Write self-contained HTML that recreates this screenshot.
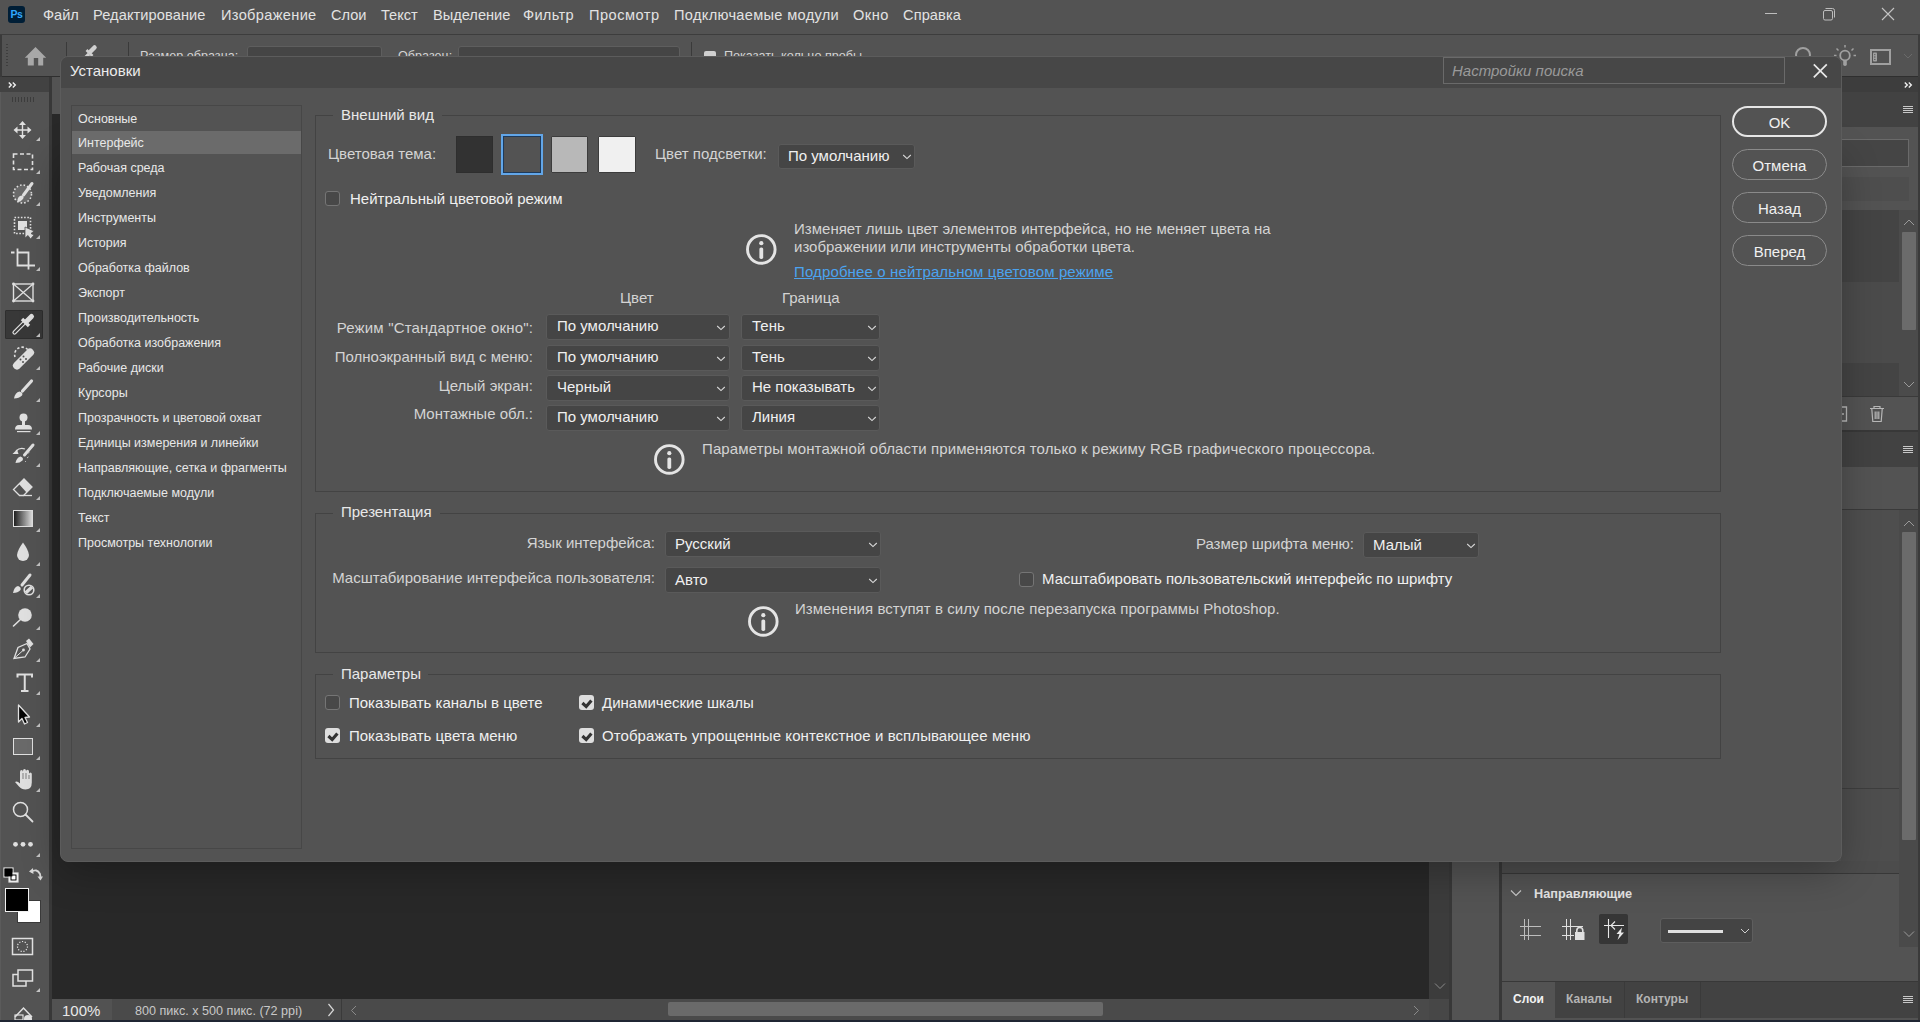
<!DOCTYPE html>
<html><head><meta charset="utf-8"><style>
html,body{margin:0;padding:0;width:1920px;height:1022px;overflow:hidden;background:#535353;font-family:"Liberation Sans",sans-serif;}
</style></head><body>
<div style="position:absolute;left:0px;top:0px;width:1920px;height:34px;background:#535353"></div>
<div style="position:absolute;left:0px;top:34px;width:1920px;height:1px;background:#3d3d3d"></div>
<div style="position:absolute;left:8px;top:6px;width:17px;height:17px;border-radius:3px;background:#001e36;color:#31a8ff;font-weight:700;font-size:10.5px;line-height:17px;text-align:center;letter-spacing:-0.3px">Ps</div>
<div style="position:absolute;top:7.64px;font-size:14.6px;line-height:14.6px;color:#e2e2e2;white-space:pre;left:43px;">Файл</div>
<div style="position:absolute;top:7.64px;font-size:14.6px;line-height:14.6px;color:#e2e2e2;white-space:pre;letter-spacing:0.1px;left:93px;">Редактирование</div>
<div style="position:absolute;top:7.64px;font-size:14.6px;line-height:14.6px;color:#e2e2e2;white-space:pre;letter-spacing:0.33px;left:221px;">Изображение</div>
<div style="position:absolute;top:7.64px;font-size:14.6px;line-height:14.6px;color:#e2e2e2;white-space:pre;left:331px;">Слои</div>
<div style="position:absolute;top:7.64px;font-size:14.6px;line-height:14.6px;color:#e2e2e2;white-space:pre;left:381px;">Текст</div>
<div style="position:absolute;top:7.64px;font-size:14.6px;line-height:14.6px;color:#e2e2e2;white-space:pre;left:433px;">Выделение</div>
<div style="position:absolute;top:7.64px;font-size:14.6px;line-height:14.6px;color:#e2e2e2;white-space:pre;letter-spacing:0.3px;left:523px;">Фильтр</div>
<div style="position:absolute;top:7.64px;font-size:14.6px;line-height:14.6px;color:#e2e2e2;white-space:pre;letter-spacing:0.5px;left:589px;">Просмотр</div>
<div style="position:absolute;top:7.64px;font-size:14.6px;line-height:14.6px;color:#e2e2e2;white-space:pre;letter-spacing:0.32px;left:674px;">Подключаемые модули</div>
<div style="position:absolute;top:7.64px;font-size:14.6px;line-height:14.6px;color:#e2e2e2;white-space:pre;letter-spacing:0.5px;left:853px;">Окно</div>
<div style="position:absolute;top:7.64px;font-size:14.6px;line-height:14.6px;color:#e2e2e2;white-space:pre;letter-spacing:0.1px;left:903px;">Справка</div>
<div style="position:absolute;left:1765px;top:13px;width:12px;height:1px;background:#bdbdbd"></div>
<svg style="position:absolute;left:1820px;top:6px;" width="16" height="16" viewBox="0 0 16 16"><rect x="3.5" y="4.5" width="9" height="9.5" rx="1.5" fill="none" stroke="#bdbdbd" stroke-width="1"/><path d="M5.5 2.5 H12.5 Q14.5 2.5 14.5 4.5 V11.5" fill="none" stroke="#bdbdbd" stroke-width="1"/></svg>
<svg style="position:absolute;left:1881px;top:7px;" width="14" height="14" viewBox="0 0 14 14"><path d="M1 1 L13 13 M13 1 L1 13" stroke="#c4c4c4" stroke-width="1.1"/></svg>
<div style="position:absolute;left:0px;top:35px;width:1920px;height:42px;background:#535353"></div>
<div style="position:absolute;left:0px;top:76px;width:1920px;height:1px;background:#2f2f2f"></div>
<div style="position:absolute;left:0px;top:35px;width:2px;height:42px;background:#3a3a3a"></div>
<div style="position:absolute;left:6px;top:44px;width:2px;height:24px;background:repeating-linear-gradient(180deg,#3e3e3e 0 1.5px,transparent 1.5px 3px)"></div>
<svg style="position:absolute;left:24px;top:46px;" width="24" height="20" viewBox="0 0 24 20"><path d="M11.5 1 L0.8 11.8 H3.8 V19.4 H9.8 V12 H14.2 V19.4 H19.2 V11.8 H22.2 Z" fill="#a8a8a8"/></svg>
<div style="position:absolute;left:66px;top:42px;width:1px;height:35px;background:#3a3a3a"></div>
<svg style="position:absolute;left:78px;top:42px;" width="24" height="20" viewBox="0 0 24 20"><path d="M16.5 5.5 L12.5 9.5" stroke="#d0d0d0" stroke-width="4.5" stroke-linecap="round"/><path d="M8.5 8 L14.5 14" stroke="#d0d0d0" stroke-width="2.6"/><path d="M11 12 L4 19" stroke="#d0d0d0" stroke-width="3.2"/></svg>
<div style="position:absolute;left:128px;top:42px;width:1px;height:35px;background:#3a3a3a"></div>
<div style="position:absolute;top:50.33px;font-size:12.6px;line-height:12.6px;color:#d4d4d4;white-space:pre;left:140px;">Размер образца:</div>
<div style="position:absolute;left:247px;top:46px;width:135px;height:22px;background:#454545;border:1px solid #5e5e5e;border-radius:3px;box-sizing:border-box"></div>
<div style="position:absolute;top:52.15px;font-size:14px;line-height:14px;color:#d4d4d4;white-space:pre;left:256px;">–</div>
<div style="position:absolute;top:50.33px;font-size:12.6px;line-height:12.6px;color:#d4d4d4;white-space:pre;left:398px;">Образец:</div>
<div style="position:absolute;left:458px;top:46px;width:222px;height:22px;background:#454545;border:1px solid #5e5e5e;border-radius:3px;box-sizing:border-box"></div>
<div style="position:absolute;left:691px;top:42px;width:1px;height:35px;background:#3a3a3a"></div>
<div style="position:absolute;top:52.15px;font-size:14px;line-height:14px;color:#d4d4d4;white-space:pre;left:466px;">–</div>
<div style="position:absolute;left:704px;top:51px;width:12px;height:12px;background:#cfcfcf;border-radius:2px"></div>
<div style="position:absolute;top:50.33px;font-size:12.6px;line-height:12.6px;color:#d4d4d4;white-space:pre;left:724px;">Показать кольцо пробы</div>
<svg style="position:absolute;left:1794px;top:46px;" width="18" height="18" viewBox="0 0 18 18"><circle cx="9" cy="9" r="7" fill="none" stroke="#a0a0a0" stroke-width="2"/></svg>
<svg style="position:absolute;left:1833px;top:44px;" width="24" height="24" viewBox="0 0 24 24"><circle cx="12" cy="11.5" r="4.8" fill="none" stroke="#a0a0a0" stroke-width="1.8"/><path d="M10.2 16 V21 Q12 23 13.8 21 V16" fill="#a0a0a0"/><path d="M12 1 V3.5 M3.5 4.5 L5.5 6.5 M20.5 4.5 L18.5 6.5 M1 11.5 H3.5 M20.5 11.5 H23" stroke="#a0a0a0" stroke-width="1.5"/></svg>
<div style="position:absolute;left:1870px;top:49px;width:21px;height:16px;border:2px solid #a0a0a0;box-sizing:border-box"></div>
<svg style="position:absolute;left:1873px;top:52px;" width="5" height="10" viewBox="0 0 5 10"><rect x="0" y="0.5" width="4" height="9" rx="0.8" fill="#a0a0a0"/><circle cx="1.8" cy="2.6" r="0.7" fill="#535353"/><circle cx="1.8" cy="5" r="0.7" fill="#535353"/><circle cx="1.8" cy="7.4" r="0.7" fill="#535353"/></svg>
<div style="position:absolute;left:1918px;top:35px;width:2px;height:42px;background:#3c3c3c"></div>
<svg style="position:absolute;left:1903px;top:53px;" width="10" height="7" viewBox="0 0 10 7"><path d="M1 1 L5 5 L9 1" fill="none" stroke="#6a6a6a" stroke-width="1"/></svg>
<div style="position:absolute;left:0px;top:77px;width:49px;height:15px;background:#424242"></div>
<svg style="position:absolute;left:8px;top:82px;" width="9" height="6" viewBox="0 0 9 6"><path d="M0.8 0.6 L3.3 3 L0.8 5.4 M4.8 0.6 L7.3 3 L4.8 5.4" fill="none" stroke="#f0f0f0" stroke-width="1.4"/></svg>
<div style="position:absolute;left:0px;top:92px;width:49px;height:928px;background:#535353;border-left:1px solid #5b5b5b;box-sizing:border-box"></div>
<div style="position:absolute;left:49px;top:77px;width:3px;height:943px;background:#383838"></div>
<div style="position:absolute;left:12px;top:97px;width:24px;height:5px;background:repeating-linear-gradient(90deg,#3c3c3c 0 1.5px,transparent 1.5px 3px)"></div>
<svg style="position:absolute;left:8px;top:118px;" width="30" height="26" viewBox="0 0 30 26"><path d="M14.5 5 V19 M7.5 12 H21.5" stroke="#e0e0e0" stroke-width="1.4"/><path d="M14.5 3 L11 7 H18 Z M14.5 21 L11 17 H18 Z M5.5 12 L9.5 8.5 V15.5 Z M23.5 12 L19.5 8.5 V15.5 Z" fill="#e0e0e0"/></svg>
<svg style="position:absolute;left:36px;top:137px;" width="4" height="4" viewBox="0 0 4 4"><path d="M4 0 V4 H0 Z" fill="#c4c4c4"/></svg>
<svg style="position:absolute;left:8px;top:150px;" width="30" height="26" viewBox="0 0 30 26"><rect x="5.5" y="4" width="19" height="15.5" fill="none" stroke="#e0e0e0" stroke-width="1.6" stroke-dasharray="4 2.5"/></svg>
<svg style="position:absolute;left:36px;top:170px;" width="4" height="4" viewBox="0 0 4 4"><path d="M4 0 V4 H0 Z" fill="#c4c4c4"/></svg>
<svg style="position:absolute;left:8px;top:181px;" width="30" height="26" viewBox="0 0 30 26"><circle cx="14.5" cy="13" r="9" fill="#6a6a6a" stroke="#e0e0e0" stroke-width="1.6" stroke-dasharray="1.6 2"/><path d="M24 2.5 L15.5 14" stroke="#e0e0e0" stroke-width="3" stroke-linecap="round"/><path d="M9.5 21 Q9 15 14 14.5 Q17 16 14.5 18.5 Q12.5 21 9.5 21 Z" fill="#e0e0e0"/></svg>
<svg style="position:absolute;left:36px;top:202px;" width="4" height="4" viewBox="0 0 4 4"><path d="M4 0 V4 H0 Z" fill="#c4c4c4"/></svg>
<svg style="position:absolute;left:8px;top:213px;" width="30" height="26" viewBox="0 0 30 26"><rect x="6.5" y="4.5" width="16" height="16" fill="none" stroke="#e0e0e0" stroke-width="1.6" stroke-dasharray="1.6 1.6"/><rect x="10" y="8" width="9" height="9" fill="#e0e0e0"/><path d="M17 14 L17 25 L20 22.5 L22.5 26 L26 22 L23 20.5 L26 18 Z" fill="#e0e0e0" stroke="#535353" stroke-width="0.8"/></svg>
<svg style="position:absolute;left:36px;top:235px;" width="4" height="4" viewBox="0 0 4 4"><path d="M4 0 V4 H0 Z" fill="#c4c4c4"/></svg>
<svg style="position:absolute;left:8px;top:247px;" width="30" height="26" viewBox="0 0 30 26"><path d="M3 5.5 H6.5 M9.5 1.5 V18.5 H26.5 M9.5 5.5 H20.5 V22.5 M23.5 18.5 H27" fill="none" stroke="#e0e0e0" stroke-width="1.8"/></svg>
<svg style="position:absolute;left:36px;top:267px;" width="4" height="4" viewBox="0 0 4 4"><path d="M4 0 V4 H0 Z" fill="#c4c4c4"/></svg>
<svg style="position:absolute;left:8px;top:281px;" width="30" height="26" viewBox="0 0 30 26"><rect x="5.5" y="3" width="19.5" height="17" fill="none" stroke="#e0e0e0" stroke-width="1.4"/><path d="M5.5 3 L25 20 M25 3 L5.5 20" stroke="#e0e0e0" stroke-width="1.3"/><circle cx="5.5" cy="3" r="1.4" fill="#e0e0e0"/><circle cx="25" cy="3" r="1.4" fill="#e0e0e0"/><circle cx="5.5" cy="20" r="1.4" fill="#e0e0e0"/><circle cx="25" cy="20" r="1.4" fill="#e0e0e0"/></svg>
<div style="position:absolute;left:5px;top:310px;width:38px;height:29px;background:#383838;border:1px solid #2e2e2e;box-sizing:border-box;border-radius:1px"></div>
<svg style="position:absolute;left:8px;top:312px;" width="30" height="26" viewBox="0 0 30 26"><path d="M6.5 20.5 L17 10" stroke="#e0e0e0" stroke-width="4.2" stroke-linecap="round"/><path d="M6.5 20.5 L17 10" stroke="#383838" stroke-width="1.8" stroke-linecap="round"/><path d="M14 7 L21 14" stroke="#e0e0e0" stroke-width="3.4"/><path d="M18.5 9.5 L23.5 4.5" stroke="#e0e0e0" stroke-width="5" stroke-linecap="round"/></svg>
<svg style="position:absolute;left:36px;top:333px;" width="4" height="4" viewBox="0 0 4 4"><path d="M4 0 V4 H0 Z" fill="#c4c4c4"/></svg>
<svg style="position:absolute;left:8px;top:344px;" width="30" height="26" viewBox="0 0 30 26"><path d="M7 13 A7.5 7.5 0 0 1 20 6" fill="none" stroke="#e0e0e0" stroke-width="1.6" stroke-dasharray="2.4 2"/><path d="M9 21.5 L22 8.5" stroke="#e0e0e0" stroke-width="8" stroke-linecap="round"/><circle cx="15.5" cy="12.5" r="1" fill="#535353"/><circle cx="12.5" cy="15.5" r="1" fill="#535353"/><circle cx="18" cy="15" r="1" fill="#535353"/><circle cx="15" cy="18" r="1" fill="#535353"/></svg>
<svg style="position:absolute;left:36px;top:366px;" width="4" height="4" viewBox="0 0 4 4"><path d="M4 0 V4 H0 Z" fill="#c4c4c4"/></svg>
<svg style="position:absolute;left:8px;top:376px;" width="30" height="26" viewBox="0 0 30 26"><path d="M23.5 5 L14.5 15" stroke="#e0e0e0" stroke-width="3.2" stroke-linecap="round"/><path d="M6 22.5 Q7 16.5 11.5 15.5 Q15.5 16.5 14 19.5 Q11 22.5 6 22.5 Z" fill="#e0e0e0"/></svg>
<svg style="position:absolute;left:36px;top:398px;" width="4" height="4" viewBox="0 0 4 4"><path d="M4 0 V4 H0 Z" fill="#c4c4c4"/></svg>
<svg style="position:absolute;left:8px;top:408px;" width="30" height="26" viewBox="0 0 30 26"><circle cx="15.5" cy="9.5" r="4" fill="#e0e0e0"/><rect x="14" y="12" width="3" height="5" fill="#e0e0e0"/><path d="M7 21.5 Q7 17 11 17 H20 Q24 17 24 21.5 Z" fill="#e0e0e0"/><rect x="9" y="23" width="13.5" height="1.2" fill="#e0e0e0"/></svg>
<svg style="position:absolute;left:36px;top:431px;" width="4" height="4" viewBox="0 0 4 4"><path d="M4 0 V4 H0 Z" fill="#c4c4c4"/></svg>
<svg style="position:absolute;left:8px;top:441px;" width="30" height="26" viewBox="0 0 30 26"><path d="M4.5 13 L9 8.5 L10.5 13 Z" fill="#e0e0e0"/><path d="M8 10 Q12 6 17 8" fill="none" stroke="#e0e0e0" stroke-width="1.2"/><path d="M25 4 L16.5 14" stroke="#e0e0e0" stroke-width="3" stroke-linecap="round"/><path d="M7.5 22 Q8.5 16.5 12.5 15.5 Q16 16.5 14.5 19.5 Q12 22 7.5 22 Z" fill="#e0e0e0"/><path d="M20.5 12 L22 11 M19 17 L21 15.5 M17 21 L18 20" stroke="#e0e0e0" stroke-width="1" stroke-dasharray="1 1"/></svg>
<svg style="position:absolute;left:36px;top:463px;" width="4" height="4" viewBox="0 0 4 4"><path d="M4 0 V4 H0 Z" fill="#c4c4c4"/></svg>
<svg style="position:absolute;left:8px;top:474px;" width="30" height="26" viewBox="0 0 30 26"><path d="M11.5 21.5 L5.5 15.5 L16 5 L24 13 L15.5 21.5 Z" fill="none" stroke="#e0e0e0" stroke-width="1.3"/><path d="M11 10 L16 5 L24 13 L18.5 18.5 Z" fill="#e0e0e0"/><path d="M15.5 21.5 H24" stroke="#e0e0e0" stroke-width="1.3"/></svg>
<svg style="position:absolute;left:36px;top:496px;" width="4" height="4" viewBox="0 0 4 4"><path d="M4 0 V4 H0 Z" fill="#c4c4c4"/></svg>
<div style="position:absolute;left:13px;top:510px;width:20px;height:17px;border:1.5px solid #e0e0e0;box-sizing:border-box;background:linear-gradient(90deg,#1e1e1e,#dcdcdc)"></div>
<svg style="position:absolute;left:36px;top:528px;" width="4" height="4" viewBox="0 0 4 4"><path d="M4 0 V4 H0 Z" fill="#c4c4c4"/></svg>
<svg style="position:absolute;left:8px;top:538px;" width="30" height="26" viewBox="0 0 30 26"><path d="M15 4.5 Q20.5 12 21 17 A6 6 0 0 1 9 17 Q9.5 12 15 4.5 Z" fill="#e0e0e0"/></svg>
<svg style="position:absolute;left:36px;top:562px;" width="4" height="4" viewBox="0 0 4 4"><path d="M4 0 V4 H0 Z" fill="#c4c4c4"/></svg>
<svg style="position:absolute;left:8px;top:570px;" width="30" height="26" viewBox="0 0 30 26"><path d="M22 5 L14 15" stroke="#e0e0e0" stroke-width="3" stroke-linecap="round"/><path d="M5 23 Q6 17 10 16 Q13.5 17 12.5 20 Q10 23 5 23 Z" fill="#e0e0e0"/><circle cx="21" cy="20" r="4.8" fill="none" stroke="#e0e0e0" stroke-width="1.6"/><path d="M17.8 22.8 L24 17" stroke="#e0e0e0" stroke-width="3.4"/></svg>
<svg style="position:absolute;left:36px;top:594px;" width="4" height="4" viewBox="0 0 4 4"><path d="M4 0 V4 H0 Z" fill="#c4c4c4"/></svg>
<svg style="position:absolute;left:8px;top:602px;" width="30" height="26" viewBox="0 0 30 26"><circle cx="17" cy="13" r="6.8" fill="#e0e0e0"/><path d="M5.5 24 L13 17" stroke="#e0e0e0" stroke-width="1.6" stroke-linecap="round"/></svg>
<svg style="position:absolute;left:36px;top:626px;" width="4" height="4" viewBox="0 0 4 4"><path d="M4 0 V4 H0 Z" fill="#c4c4c4"/></svg>
<svg style="position:absolute;left:8px;top:636px;" width="30" height="26" viewBox="0 0 30 26"><path d="M6 22.5 L10 11.5 L19 7.5 L22 13 L17 21 Z" fill="none" stroke="#e0e0e0" stroke-width="1.3"/><path d="M18 5 L21 2.5 L25.5 8 L22 11.5 Z" fill="#e0e0e0"/><path d="M6 22.5 L15 14.5" stroke="#e0e0e0" stroke-width="1"/><circle cx="15.5" cy="14" r="1.4" fill="#e0e0e0"/></svg>
<svg style="position:absolute;left:36px;top:658px;" width="4" height="4" viewBox="0 0 4 4"><path d="M4 0 V4 H0 Z" fill="#c4c4c4"/></svg>
<svg style="position:absolute;left:8px;top:669px;" width="30" height="26" viewBox="0 0 30 26"><path d="M9.5 8.5 V5.5 H24 V8.5 M16.75 5.5 V22 M13 22 H20.5" fill="none" stroke="#e0e0e0" stroke-width="2"/></svg>
<svg style="position:absolute;left:36px;top:691px;" width="4" height="4" viewBox="0 0 4 4"><path d="M4 0 V4 H0 Z" fill="#c4c4c4"/></svg>
<svg style="position:absolute;left:8px;top:701px;" width="30" height="26" viewBox="0 0 30 26"><path d="M10.5 4 V21 L14 17.5 L16.5 23 L19.5 21.5 L17 16.5 L21.5 16 Z" fill="#050505" stroke="#e0e0e0" stroke-width="1.3" stroke-linejoin="round"/></svg>
<svg style="position:absolute;left:36px;top:723px;" width="4" height="4" viewBox="0 0 4 4"><path d="M4 0 V4 H0 Z" fill="#c4c4c4"/></svg>
<div style="position:absolute;left:13px;top:738px;width:20px;height:17px;border:1.5px solid #e0e0e0;box-sizing:border-box;background:#6a6a6a"></div>
<svg style="position:absolute;left:36px;top:756px;" width="4" height="4" viewBox="0 0 4 4"><path d="M4 0 V4 H0 Z" fill="#c4c4c4"/></svg>
<svg style="position:absolute;left:8px;top:766px;" width="30" height="26" viewBox="0 0 30 26"><path d="M7 16 Q9 14.5 12 17.5 V6 Q12 4 13.5 4 Q15 4 15 6 V13 V5 Q15 3 16.5 3 Q18 3 18 5 V13 V5.5 Q18 3.8 19.5 3.8 Q21 3.8 21 5.5 V13 V8 Q21 6.5 22.3 6.5 Q23.8 6.5 23.8 8 V16.5 Q23.8 23.5 17.5 23.5 Q13.5 23.5 11 20.5 Z" fill="#e0e0e0"/><path d="M15 13 V7 M18 13 V7 M21 13 V9" stroke="#535353" stroke-width="0.7"/></svg>
<svg style="position:absolute;left:36px;top:788px;" width="4" height="4" viewBox="0 0 4 4"><path d="M4 0 V4 H0 Z" fill="#c4c4c4"/></svg>
<svg style="position:absolute;left:8px;top:798px;" width="30" height="26" viewBox="0 0 30 26"><circle cx="12.5" cy="11.5" r="7" fill="none" stroke="#e0e0e0" stroke-width="1.5"/><path d="M17.5 16.5 L24.5 23.5" stroke="#e0e0e0" stroke-width="1.8" stroke-linecap="round"/></svg>
<svg style="position:absolute;left:8px;top:832px;" width="30" height="26" viewBox="0 0 30 26"><circle cx="7.5" cy="12.3" r="2.4" fill="#e0e0e0"/><circle cx="15" cy="12.3" r="2.4" fill="#e0e0e0"/><circle cx="22.5" cy="12.3" r="2.4" fill="#e0e0e0"/></svg>
<svg style="position:absolute;left:36px;top:853px;" width="4" height="4" viewBox="0 0 4 4"><path d="M4 0 V4 H0 Z" fill="#c4c4c4"/></svg>
<svg style="position:absolute;left:3px;top:867px;" width="16" height="16" viewBox="0 0 16 16"><rect x="1" y="1" width="9" height="9" fill="#000" stroke="#e0e0e0" stroke-width="1.2"/><rect x="6" y="6" width="9" height="9" fill="#fff" stroke="#e0e0e0" stroke-width="1.2"/><rect x="8" y="8" width="5" height="5" fill="#fff" stroke="#000" stroke-width="1"/><rect x="1.6" y="1.6" width="7.8" height="7.8" fill="#000"/></svg>
<svg style="position:absolute;left:28px;top:866px;" width="16" height="16" viewBox="0 0 16 16"><path d="M3 6 Q9 2 12 8 L12.5 11" fill="none" stroke="#d8d8d8" stroke-width="1.8"/><path d="M1 5.5 L5 2 L5.5 8 Z M9.5 10.5 L15 10.5 L12.5 14.5 Z" fill="#d8d8d8"/></svg>
<div style="position:absolute;left:17px;top:900px;width:24px;height:23px;background:#fff;border:1px solid #3a3a3a;box-sizing:border-box"></div>
<div style="position:absolute;left:5px;top:888px;width:24px;height:24px;background:#000;border:1.5px solid #f0f0f0;box-sizing:border-box"></div>
<svg style="position:absolute;left:11px;top:937px;" width="24" height="20" viewBox="0 0 24 20"><rect x="1.5" y="1.5" width="20" height="16" fill="none" stroke="#e0e0e0" stroke-width="1.5"/><circle cx="11.5" cy="9.5" r="5" fill="none" stroke="#e0e0e0" stroke-width="1.2" stroke-dasharray="1.2 1.6"/></svg>
<svg style="position:absolute;left:11px;top:968px;" width="24" height="21" viewBox="0 0 24 21"><rect x="2" y="6.5" width="13" height="11.5" fill="none" stroke="#e0e0e0" stroke-width="1.5"/><rect x="7" y="2" width="14.5" height="11" fill="#535353" stroke="#e0e0e0" stroke-width="1.5"/></svg>
<svg style="position:absolute;left:36px;top:988px;" width="4" height="4" viewBox="0 0 4 4"><path d="M4 0 V4 H0 Z" fill="#c4c4c4"/></svg>
<svg style="position:absolute;left:13px;top:1006px;" width="22" height="14" viewBox="0 0 22 14"><path d="M2 11 L10.5 2 L19 11" fill="none" stroke="#e0e0e0" stroke-width="1.5"/><rect x="2" y="9" width="8" height="5" fill="none" stroke="#e0e0e0" stroke-width="1.2"/><circle cx="15" cy="13" r="4" fill="#e0e0e0"/></svg>
<div style="position:absolute;left:52px;top:77px;width:1377px;height:37px;background:#535353"></div>
<div style="position:absolute;left:52px;top:114px;width:1377px;height:885px;background:#282828"></div>
<div style="position:absolute;left:1429px;top:77px;width:20px;height:922px;background:#3c3c3c"></div>
<div style="position:absolute;left:1449px;top:77px;width:3px;height:943px;background:#383838"></div>
<div style="position:absolute;left:1452px;top:77px;width:47px;height:943px;background:#535353"></div>
<div style="position:absolute;left:1499px;top:77px;width:3px;height:943px;background:#383838"></div>
<div style="position:absolute;left:52px;top:999px;width:1377px;height:21px;background:#4a4a4a"></div>
<div style="position:absolute;left:52px;top:999px;width:60px;height:21px;background:#525252"></div>
<div style="position:absolute;top:1003.30px;font-size:15px;line-height:15px;color:#e8e8e8;white-space:pre;left:62px;">100%</div>
<div style="position:absolute;top:1005.33px;font-size:12.6px;line-height:12.6px;color:#c8c8c8;white-space:pre;left:135px;">800 пикс. x 500 пикс. (72 ppi)</div>
<div style="position:absolute;left:341px;top:999px;width:1px;height:21px;background:#3a3a3a"></div>
<div style="position:absolute;left:668px;top:1002px;width:435px;height:14px;background:#6a6a6a;border-radius:2px"></div>
<div style="position:absolute;left:0px;top:1020px;width:1920px;height:2px;background:#1f2533"></div>
<div style="position:absolute;left:1502px;top:77px;width:418px;height:943px;background:#535353"></div>
<div style="position:absolute;left:1502px;top:861px;width:397px;height:12px;background:#4c4c4c"></div>
<div style="position:absolute;left:1502px;top:873px;width:397px;height:1px;background:#383838"></div>
<svg style="position:absolute;left:1510px;top:889px;" width="12" height="8" viewBox="0 0 12 8"><path d="M1 1.5 L6 6.5 L11 1.5" fill="none" stroke="#c8c8c8" stroke-width="1.1"/></svg>
<div style="position:absolute;top:888.25px;font-size:12.7px;line-height:12.7px;color:#e4e4e4;white-space:pre;font-weight:700;left:1534px;">Направляющие</div>
<svg style="position:absolute;left:1520px;top:919px;" width="22" height="22" viewBox="0 0 22 22"><path d="M4.5 0 V21 M8.5 0 V21 M0 7.5 H21 M0 16.5 H21" stroke="#bdbdbd" stroke-width="1"/></svg>
<svg style="position:absolute;left:1562px;top:919px;" width="24" height="22" viewBox="0 0 24 22"><path d="M4.5 0 V21 M8.5 0 V21 M0 7.5 H21 M0 16.5 H12" stroke="#e0e0e0" stroke-width="1"/><rect x="13" y="13" width="9.5" height="8" fill="#e0e0e0"/><path d="M14.8 13 V11.5 A3 3 0 0 1 20.8 11.5 V13" fill="none" stroke="#e0e0e0" stroke-width="1.6"/></svg>
<div style="position:absolute;left:1599px;top:914px;width:29px;height:30px;background:#363636;border-radius:2px"></div>
<svg style="position:absolute;left:1602px;top:918px;" width="24" height="24" viewBox="0 0 24 24"><path d="M6.5 1 V20 M2 7.5 H22 M13 3.5 L9 7.5 L13 11.5" fill="none" stroke="#e8e8e8" stroke-width="1.1"/><path d="M20 9.5 L14.5 16 H17.5 L15.5 22 L22 14.5 H19 Z" fill="#e8e8e8"/></svg>
<div style="position:absolute;left:1660px;top:918px;width:93px;height:25px;background:#444;border:1px solid #5e5e5e;border-radius:3px;box-sizing:border-box"></div>
<div style="position:absolute;left:1668px;top:930px;width:55px;height:3px;background:#e0e0e0"></div>
<svg style="position:absolute;left:1740px;top:928px;" width="10" height="6" viewBox="0 0 10 6"><path d="M1 1 L5 5 L9 1" fill="none" stroke="#d0d0d0" stroke-width="1"/></svg>
<div style="position:absolute;left:1899px;top:861px;width:20px;height:86px;background:#4a4a4a"></div>
<svg style="position:absolute;left:1903px;top:930px;" width="12" height="8" viewBox="0 0 12 8"><path d="M1 1.5 L6 6.5 L11 1.5" fill="none" stroke="#9a9a9a" stroke-width="1"/></svg>
<div style="position:absolute;left:1502px;top:981px;width:418px;height:1px;background:#383838"></div>
<div style="position:absolute;left:1502px;top:982px;width:418px;height:36px;background:#424242"></div>
<div style="position:absolute;left:1502px;top:982px;width:53px;height:36px;background:#535353"></div>
<div style="position:absolute;left:1624px;top:982px;width:1px;height:36px;background:#3a3a3a"></div>
<div style="position:absolute;left:1700px;top:982px;width:1px;height:36px;background:#3a3a3a"></div>
<div style="position:absolute;top:992.84px;font-size:12px;line-height:12px;color:#f2f2f2;white-space:pre;font-weight:700;left:1513px;">Слои</div>
<div style="position:absolute;top:992.84px;font-size:12px;line-height:12px;color:#b4b4b4;white-space:pre;font-weight:700;left:1566px;">Каналы</div>
<div style="position:absolute;top:992.84px;font-size:12px;line-height:12px;color:#b4b4b4;white-space:pre;font-weight:700;left:1636px;">Контуры</div>
<svg style="position:absolute;left:1903px;top:996px;" width="10" height="7" viewBox="0 0 10 7"><path d="M0 0.5 H10 M0 2.5 H10 M0 4.5 H10 M0 6.5 H10" stroke="#c8c8c8" stroke-width="1"/></svg>
<div style="position:absolute;left:1841px;top:77px;width:79px;height:15px;background:#3d3d3d"></div>
<div style="position:absolute;left:1841px;top:92px;width:79px;height:35px;background:#424242"></div>
<div style="position:absolute;left:1841px;top:127px;width:79px;height:83px;background:#535353"></div>
<div style="position:absolute;left:1841px;top:210px;width:79px;height:187px;background:#474747"></div>
<div style="position:absolute;left:1841px;top:397px;width:79px;height:33px;background:#535353"></div>
<div style="position:absolute;left:1841px;top:430px;width:79px;height:2px;background:#383838"></div>
<div style="position:absolute;left:1841px;top:432px;width:79px;height:35px;background:#424242"></div>
<div style="position:absolute;left:1841px;top:467px;width:79px;height:42px;background:#535353"></div>
<div style="position:absolute;left:1841px;top:509px;width:79px;height:1px;background:#3a3a3a"></div>
<div style="position:absolute;left:1841px;top:510px;width:79px;height:351px;background:#4e4e4e"></div>
<svg style="position:absolute;left:1904px;top:82px;" width="9" height="6" viewBox="0 0 9 6"><path d="M0.8 0.6 L3.3 3 L0.8 5.4 M4.8 0.6 L7.3 3 L4.8 5.4" fill="none" stroke="#f0f0f0" stroke-width="1.4"/></svg>
<svg style="position:absolute;left:1903px;top:106px;" width="10" height="7" viewBox="0 0 10 7"><path d="M0 0.5 H10 M0 2.5 H10 M0 4.5 H10 M0 6.5 H10" stroke="#c8c8c8" stroke-width="1"/></svg>
<div style="position:absolute;left:1841px;top:139px;width:68px;height:28px;background:#454545;border:1px solid #6a6a6a;box-sizing:border-box"></div>
<div style="position:absolute;left:1841px;top:177px;width:68px;height:24px;background:#4e4e4e"></div>
<div style="position:absolute;left:1841px;top:210px;width:58px;height:72px;background:#444444"></div>
<div style="position:absolute;left:1841px;top:282px;width:58px;height:81px;background:#4b4b4b"></div>
<div style="position:absolute;left:1841px;top:363px;width:58px;height:33px;background:#444444"></div>
<div style="position:absolute;left:1899px;top:210px;width:21px;height:187px;background:#4b4b4b"></div>
<div style="position:absolute;left:1902px;top:232px;width:14px;height:98px;background:#6b6b6b;border-radius:1px"></div>
<svg style="position:absolute;left:1903px;top:219px;" width="12" height="7" viewBox="0 0 12 7"><path d="M1 6 L6 1 L11 6" fill="none" stroke="#9a9a9a" stroke-width="1"/></svg>
<svg style="position:absolute;left:1903px;top:381px;" width="12" height="7" viewBox="0 0 12 7"><path d="M1 1 L6 6 L11 1" fill="none" stroke="#9a9a9a" stroke-width="1"/></svg>
<div style="position:absolute;left:1841px;top:396px;width:79px;height:1px;background:#3a3a3a"></div>
<svg style="position:absolute;left:1869px;top:405px;" width="16" height="18" viewBox="0 0 16 18"><path d="M1 3.5 H15 M5 3.5 V1.5 H11 V3.5 M2.8 4 L3.8 16.5 H12.2 L13.2 4 M6.2 6.5 V14 M8 6.5 V14 M9.8 6.5 V14" fill="none" stroke="#b8b8b8" stroke-width="1.2"/></svg>
<svg style="position:absolute;left:1841px;top:406px;" width="10" height="16" viewBox="0 0 10 16"><path d="M0 1 H5.5 V15 H0 M1 8 H3" fill="none" stroke="#b8b8b8" stroke-width="1.3"/></svg>
<svg style="position:absolute;left:1903px;top:446px;" width="10" height="7" viewBox="0 0 10 7"><path d="M0 0.5 H10 M0 2.5 H10 M0 4.5 H10 M0 6.5 H10" stroke="#c8c8c8" stroke-width="1"/></svg>
<div style="position:absolute;left:1899px;top:510px;width:21px;height:363px;background:#4a4a4a"></div>
<div style="position:absolute;left:1902px;top:532px;width:14px;height:308px;background:#6b6b6b;border-radius:1px"></div>
<svg style="position:absolute;left:1903px;top:520px;" width="12" height="7" viewBox="0 0 12 7"><path d="M1 6 L6 1 L11 6" fill="none" stroke="#9a9a9a" stroke-width="1"/></svg>
<div style="position:absolute;left:1841px;top:788px;width:58px;height:1px;background:#3e3e3e"></div>
<div style="position:absolute;left:1918px;top:77px;width:2px;height:943px;background:#3a3a3a"></div>
<svg style="position:absolute;left:1434px;top:982px;" width="12" height="8" viewBox="0 0 12 8"><path d="M1 1.5 L6 6.5 L11 1.5" fill="none" stroke="#8a8a8a" stroke-width="1"/></svg>
<svg style="position:absolute;left:327px;top:1003px;" width="8" height="14" viewBox="0 0 8 14"><path d="M1.5 1 L6.5 7 L1.5 13" fill="none" stroke="#d8d8d8" stroke-width="1.2"/></svg>
<svg style="position:absolute;left:350px;top:1005px;" width="7" height="11" viewBox="0 0 7 11"><path d="M6 1 L1.5 5.5 L6 10" fill="none" stroke="#8a8a8a" stroke-width="1"/></svg>
<svg style="position:absolute;left:1413px;top:1005px;" width="7" height="11" viewBox="0 0 7 11"><path d="M1 1 L5.5 5.5 L1 10" fill="none" stroke="#8a8a8a" stroke-width="1"/></svg>
<div style="position:absolute;left:1429px;top:999px;width:20px;height:21px;background:#474747"></div>
<div style="position:absolute;left:62px;top:150px;width:1777px;height:710px;border-radius:8px;box-shadow:0 10px 40px rgba(0,0,0,0.3)"></div>
<div style="position:absolute;left:60px;top:56px;width:1782px;height:806px;background:#535353;border-radius:8px;overflow:hidden;border:1px solid #5c5c5c;box-sizing:border-box">
<div style="position:absolute;left:0;top:0;width:1781px;height:31px;background:#474747"></div>
</div>
<div style="position:absolute;top:63.30px;font-size:15px;line-height:15px;color:#ececec;white-space:pre;left:70px;">Установки</div>
<div style="position:absolute;left:1443px;top:57px;width:342px;height:27px;background:#474747;border:1px solid #6a6a6a;box-sizing:border-box"></div>
<div style="position:absolute;top:63.30px;font-size:15px;line-height:15px;color:#9a9a9a;white-space:pre;font-style:italic;left:1452px;">Настройки поиска</div>
<svg style="position:absolute;left:1812px;top:63px;" width="16" height="16" viewBox="0 0 16 16"><path d="M1.8 1.3 L14.8 14.3 M14.8 1.3 L1.8 14.3" stroke="#e8e8e8" stroke-width="1.7"/></svg>
<div style="position:absolute;left:71px;top:105px;width:231px;height:744px;border:1px solid #474747;box-sizing:border-box"></div>
<div style="position:absolute;left:72px;top:131px;width:229px;height:23px;background:#6b6b6b"></div>
<div style="position:absolute;top:113.42px;font-size:12.5px;line-height:12.5px;color:#e8e8e8;white-space:pre;left:78px;">Основные</div>
<div style="position:absolute;top:137.42px;font-size:12.5px;line-height:12.5px;color:#e8e8e8;white-space:pre;left:78px;">Интерфейс</div>
<div style="position:absolute;top:162.42px;font-size:12.5px;line-height:12.5px;color:#e8e8e8;white-space:pre;left:78px;">Рабочая среда</div>
<div style="position:absolute;top:187.42px;font-size:12.5px;line-height:12.5px;color:#e8e8e8;white-space:pre;left:78px;">Уведомления</div>
<div style="position:absolute;top:212.42px;font-size:12.5px;line-height:12.5px;color:#e8e8e8;white-space:pre;left:78px;">Инструменты</div>
<div style="position:absolute;top:237.42px;font-size:12.5px;line-height:12.5px;color:#e8e8e8;white-space:pre;left:78px;">История</div>
<div style="position:absolute;top:262.42px;font-size:12.5px;line-height:12.5px;color:#e8e8e8;white-space:pre;left:78px;">Обработка файлов</div>
<div style="position:absolute;top:287.42px;font-size:12.5px;line-height:12.5px;color:#e8e8e8;white-space:pre;left:78px;">Экспорт</div>
<div style="position:absolute;top:312.42px;font-size:12.5px;line-height:12.5px;color:#e8e8e8;white-space:pre;left:78px;">Производительность</div>
<div style="position:absolute;top:337.42px;font-size:12.5px;line-height:12.5px;color:#e8e8e8;white-space:pre;left:78px;">Обработка изображения</div>
<div style="position:absolute;top:362.42px;font-size:12.5px;line-height:12.5px;color:#e8e8e8;white-space:pre;left:78px;">Рабочие диски</div>
<div style="position:absolute;top:387.42px;font-size:12.5px;line-height:12.5px;color:#e8e8e8;white-space:pre;left:78px;">Курсоры</div>
<div style="position:absolute;top:412.42px;font-size:12.5px;line-height:12.5px;color:#e8e8e8;white-space:pre;left:78px;">Прозрачность и цветовой охват</div>
<div style="position:absolute;top:437.42px;font-size:12.5px;line-height:12.5px;color:#e8e8e8;white-space:pre;left:78px;">Единицы измерения и линейки</div>
<div style="position:absolute;top:462.42px;font-size:12.5px;line-height:12.5px;color:#e8e8e8;white-space:pre;left:78px;">Направляющие, сетка и фрагменты</div>
<div style="position:absolute;top:487.42px;font-size:12.5px;line-height:12.5px;color:#e8e8e8;white-space:pre;left:78px;">Подключаемые модули</div>
<div style="position:absolute;top:512.42px;font-size:12.5px;line-height:12.5px;color:#e8e8e8;white-space:pre;left:78px;">Текст</div>
<div style="position:absolute;top:537.42px;font-size:12.5px;line-height:12.5px;color:#e8e8e8;white-space:pre;left:78px;">Просмотры технологии</div>
<div style="position:absolute;left:315px;top:115px;width:1406px;height:377px;border:1px solid #434343;box-sizing:border-box"></div>
<div style="position:absolute;left:333px;top:113px;width:109px;height:4px;background:#535353"></div>
<div style="position:absolute;top:107.30px;font-size:15px;line-height:15px;color:#e8e8e8;white-space:pre;left:341px;">Внешний вид</div>
<div style="position:absolute;left:315px;top:513px;width:1406px;height:140px;border:1px solid #434343;box-sizing:border-box"></div>
<div style="position:absolute;left:333px;top:511px;width:107px;height:4px;background:#535353"></div>
<div style="position:absolute;top:504.30px;font-size:15px;line-height:15px;color:#e8e8e8;white-space:pre;left:341px;">Презентация</div>
<div style="position:absolute;left:315px;top:674px;width:1406px;height:85px;border:1px solid #434343;box-sizing:border-box"></div>
<div style="position:absolute;left:333px;top:672px;width:95px;height:4px;background:#535353"></div>
<div style="position:absolute;top:666.30px;font-size:15px;line-height:15px;color:#e8e8e8;white-space:pre;left:341px;">Параметры</div>
<div style="position:absolute;top:146.30px;font-size:15px;line-height:15px;color:#d4d4d4;white-space:pre;left:328px;">Цветовая тема:</div>
<div style="position:absolute;left:456px;top:136px;width:37px;height:37px;background:#323232;border:1px solid #2e2e2e;box-sizing:border-box"></div>
<div style="position:absolute;left:501px;top:134px;width:42px;height:41px;border:2px solid #62a6e8;box-sizing:border-box;background:#535353;box-shadow:inset 0 0 0 1px #1d3a5c"></div>
<div style="position:absolute;left:551px;top:136px;width:37px;height:37px;background:#b8b8b8;border:1px solid #3c3c3c;box-sizing:border-box;border-radius:1px"></div>
<div style="position:absolute;left:598px;top:136px;width:38px;height:37px;background:#f0f0f0;border:1px solid #3c3c3c;box-sizing:border-box;border-radius:1px"></div>
<div style="position:absolute;top:146.30px;font-size:15px;line-height:15px;color:#d4d4d4;white-space:pre;left:655px;">Цвет подсветки:</div>
<div style="position:absolute;left:778px;top:144px;width:137px;height:25px;background:#454545;border:1px solid #5a5a5a;border-radius:3px;box-sizing:border-box"></div>
<div style="position:absolute;top:148.30px;font-size:15px;line-height:15px;color:#f0f0f0;white-space:pre;left:788px;">По умолчанию</div>
<svg style="position:absolute;left:902px;top:153px;" width="10" height="7" viewBox="0 0 10 7"><path d="M1.2 2 L5 5.6 L8.8 2" fill="none" stroke="#d8d8d8" stroke-width="1.1"/></svg>
<div style="position:absolute;left:325px;top:191px;width:15px;height:15px;background:#484848;border:1px solid #757575;border-radius:3px;box-sizing:border-box"></div>
<div style="position:absolute;top:191.30px;font-size:15px;line-height:15px;color:#f0f0f0;white-space:pre;left:350px;">Нейтральный цветовой режим</div>
<svg style="position:absolute;left:744px;top:232px;" width="34" height="34" viewBox="0 0 34 34"><circle cx="17.3" cy="17.4" r="13.8" fill="none" stroke="#e4e4e4" stroke-width="2.9"/><circle cx="17.3" cy="11.2" r="2.1" fill="#e4e4e4"/><rect x="15.4" y="15.5" width="3.8" height="11.4" rx="1.6" fill="#e4e4e4"/></svg>
<div style="position:absolute;top:221.30px;font-size:15px;line-height:15px;color:#d4d4d4;white-space:pre;letter-spacing:0.02px;left:794px;">Изменяет лишь цвет элементов интерфейса, но не меняет цвета на</div>
<div style="position:absolute;top:239.30px;font-size:15px;line-height:15px;color:#d4d4d4;white-space:pre;left:794px;">изображении или инструменты обработки цвета.</div>
<div style="position:absolute;top:264.30px;font-size:15px;line-height:15px;color:#4ba3f0;white-space:pre;letter-spacing:0.13px;left:794px;text-decoration:underline">Подробнее о нейтральном цветовом режиме</div>
<div style="position:absolute;top:290.30px;font-size:15px;line-height:15px;color:#d4d4d4;white-space:pre;left:620px;">Цвет</div>
<div style="position:absolute;top:290.30px;font-size:15px;line-height:15px;color:#d4d4d4;white-space:pre;left:782px;">Граница</div>
<div style="position:absolute;top:320.30px;font-size:15px;line-height:15px;color:#d4d4d4;white-space:pre;letter-spacing:0.17px;right:1387px;text-align:right;">Режим "Стандартное окно":</div>
<div style="position:absolute;left:546px;top:314px;width:184px;height:26px;background:#454545;border:1px solid #5a5a5a;border-radius:3px;box-sizing:border-box"></div>
<div style="position:absolute;top:318.30px;font-size:15px;line-height:15px;color:#f0f0f0;white-space:pre;left:557px;">По умолчанию</div>
<svg style="position:absolute;left:716px;top:324px;" width="10" height="7" viewBox="0 0 10 7"><path d="M1.2 2 L5 5.6 L8.8 2" fill="none" stroke="#d8d8d8" stroke-width="1.1"/></svg>
<div style="position:absolute;left:741px;top:314px;width:139px;height:26px;background:#454545;border:1px solid #5a5a5a;border-radius:3px;box-sizing:border-box"></div>
<div style="position:absolute;top:318.30px;font-size:15px;line-height:15px;color:#f0f0f0;white-space:pre;left:752px;">Тень</div>
<svg style="position:absolute;left:867px;top:324px;" width="10" height="7" viewBox="0 0 10 7"><path d="M1.2 2 L5 5.6 L8.8 2" fill="none" stroke="#d8d8d8" stroke-width="1.1"/></svg>
<div style="position:absolute;top:349.30px;font-size:15px;line-height:15px;color:#d4d4d4;white-space:pre;right:1387px;text-align:right;">Полноэкранный вид с меню:</div>
<div style="position:absolute;left:546px;top:345px;width:184px;height:26px;background:#454545;border:1px solid #5a5a5a;border-radius:3px;box-sizing:border-box"></div>
<div style="position:absolute;top:349.30px;font-size:15px;line-height:15px;color:#f0f0f0;white-space:pre;left:557px;">По умолчанию</div>
<svg style="position:absolute;left:716px;top:355px;" width="10" height="7" viewBox="0 0 10 7"><path d="M1.2 2 L5 5.6 L8.8 2" fill="none" stroke="#d8d8d8" stroke-width="1.1"/></svg>
<div style="position:absolute;left:741px;top:345px;width:139px;height:26px;background:#454545;border:1px solid #5a5a5a;border-radius:3px;box-sizing:border-box"></div>
<div style="position:absolute;top:349.30px;font-size:15px;line-height:15px;color:#f0f0f0;white-space:pre;left:752px;">Тень</div>
<svg style="position:absolute;left:867px;top:355px;" width="10" height="7" viewBox="0 0 10 7"><path d="M1.2 2 L5 5.6 L8.8 2" fill="none" stroke="#d8d8d8" stroke-width="1.1"/></svg>
<div style="position:absolute;top:378.30px;font-size:15px;line-height:15px;color:#d4d4d4;white-space:pre;right:1387px;text-align:right;">Целый экран:</div>
<div style="position:absolute;left:546px;top:375px;width:184px;height:26px;background:#454545;border:1px solid #5a5a5a;border-radius:3px;box-sizing:border-box"></div>
<div style="position:absolute;top:379.30px;font-size:15px;line-height:15px;color:#f0f0f0;white-space:pre;left:557px;">Черный</div>
<svg style="position:absolute;left:716px;top:385px;" width="10" height="7" viewBox="0 0 10 7"><path d="M1.2 2 L5 5.6 L8.8 2" fill="none" stroke="#d8d8d8" stroke-width="1.1"/></svg>
<div style="position:absolute;left:741px;top:375px;width:139px;height:26px;background:#454545;border:1px solid #5a5a5a;border-radius:3px;box-sizing:border-box"></div>
<div style="position:absolute;top:379.30px;font-size:15px;line-height:15px;color:#f0f0f0;white-space:pre;left:752px;">Не показывать</div>
<svg style="position:absolute;left:867px;top:385px;" width="10" height="7" viewBox="0 0 10 7"><path d="M1.2 2 L5 5.6 L8.8 2" fill="none" stroke="#d8d8d8" stroke-width="1.1"/></svg>
<div style="position:absolute;top:406.30px;font-size:15px;line-height:15px;color:#d4d4d4;white-space:pre;right:1387px;text-align:right;">Монтажные обл.:</div>
<div style="position:absolute;left:546px;top:405px;width:184px;height:26px;background:#454545;border:1px solid #5a5a5a;border-radius:3px;box-sizing:border-box"></div>
<div style="position:absolute;top:409.30px;font-size:15px;line-height:15px;color:#f0f0f0;white-space:pre;left:557px;">По умолчанию</div>
<svg style="position:absolute;left:716px;top:415px;" width="10" height="7" viewBox="0 0 10 7"><path d="M1.2 2 L5 5.6 L8.8 2" fill="none" stroke="#d8d8d8" stroke-width="1.1"/></svg>
<div style="position:absolute;left:741px;top:405px;width:139px;height:26px;background:#454545;border:1px solid #5a5a5a;border-radius:3px;box-sizing:border-box"></div>
<div style="position:absolute;top:409.30px;font-size:15px;line-height:15px;color:#f0f0f0;white-space:pre;left:752px;">Линия</div>
<svg style="position:absolute;left:867px;top:415px;" width="10" height="7" viewBox="0 0 10 7"><path d="M1.2 2 L5 5.6 L8.8 2" fill="none" stroke="#d8d8d8" stroke-width="1.1"/></svg>
<svg style="position:absolute;left:652px;top:442px;" width="34" height="34" viewBox="0 0 34 34"><circle cx="17.3" cy="17.4" r="13.8" fill="none" stroke="#e4e4e4" stroke-width="2.9"/><circle cx="17.3" cy="11.2" r="2.1" fill="#e4e4e4"/><rect x="15.4" y="15.5" width="3.8" height="11.4" rx="1.6" fill="#e4e4e4"/></svg>
<div style="position:absolute;top:441.30px;font-size:15px;line-height:15px;color:#d4d4d4;white-space:pre;letter-spacing:0.12px;left:702px;">Параметры монтажной области применяются только к режиму RGB графического процессора.</div>
<div style="position:absolute;top:535.30px;font-size:15px;line-height:15px;color:#d4d4d4;white-space:pre;right:1265px;text-align:right;">Язык интерфейса:</div>
<div style="position:absolute;left:665px;top:531px;width:216px;height:26px;background:#454545;border:1px solid #5a5a5a;border-radius:3px;box-sizing:border-box"></div>
<div style="position:absolute;top:536.30px;font-size:15px;line-height:15px;color:#f0f0f0;white-space:pre;left:675px;">Русский</div>
<svg style="position:absolute;left:868px;top:541px;" width="10" height="7" viewBox="0 0 10 7"><path d="M1.2 2 L5 5.6 L8.8 2" fill="none" stroke="#d8d8d8" stroke-width="1.1"/></svg>
<div style="position:absolute;top:570.30px;font-size:15px;line-height:15px;color:#d4d4d4;white-space:pre;right:1265px;text-align:right;">Масштабирование интерфейса пользователя:</div>
<div style="position:absolute;left:665px;top:567px;width:216px;height:26px;background:#454545;border:1px solid #5a5a5a;border-radius:3px;box-sizing:border-box"></div>
<div style="position:absolute;top:572.30px;font-size:15px;line-height:15px;color:#f0f0f0;white-space:pre;left:675px;">Авто</div>
<svg style="position:absolute;left:868px;top:577px;" width="10" height="7" viewBox="0 0 10 7"><path d="M1.2 2 L5 5.6 L8.8 2" fill="none" stroke="#d8d8d8" stroke-width="1.1"/></svg>
<svg style="position:absolute;left:746px;top:604px;" width="34" height="34" viewBox="0 0 34 34"><circle cx="17.3" cy="17.4" r="13.8" fill="none" stroke="#e4e4e4" stroke-width="2.9"/><circle cx="17.3" cy="11.2" r="2.1" fill="#e4e4e4"/><rect x="15.4" y="15.5" width="3.8" height="11.4" rx="1.6" fill="#e4e4e4"/></svg>
<div style="position:absolute;top:601.30px;font-size:15px;line-height:15px;color:#d4d4d4;white-space:pre;letter-spacing:0.05px;left:795px;">Изменения вступят в силу после перезапуска программы Photoshop.</div>
<div style="position:absolute;top:536.30px;font-size:15px;line-height:15px;color:#d4d4d4;white-space:pre;right:566px;text-align:right;">Размер шрифта меню:</div>
<div style="position:absolute;left:1363px;top:532px;width:116px;height:26px;background:#454545;border:1px solid #5a5a5a;border-radius:3px;box-sizing:border-box"></div>
<div style="position:absolute;top:537.30px;font-size:15px;line-height:15px;color:#f0f0f0;white-space:pre;left:1373px;">Малый</div>
<svg style="position:absolute;left:1466px;top:542px;" width="10" height="7" viewBox="0 0 10 7"><path d="M1.2 2 L5 5.6 L8.8 2" fill="none" stroke="#d8d8d8" stroke-width="1.1"/></svg>
<div style="position:absolute;left:1019px;top:572px;width:15px;height:15px;background:#484848;border:1px solid #757575;border-radius:3px;box-sizing:border-box"></div>
<div style="position:absolute;top:571.30px;font-size:15px;line-height:15px;color:#f0f0f0;white-space:pre;left:1042px;">Масштабировать пользовательский интерфейс по шрифту</div>
<div style="position:absolute;left:325px;top:695px;width:15px;height:15px;background:#484848;border:1px solid #757575;border-radius:3px;box-sizing:border-box"></div>
<div style="position:absolute;top:695.30px;font-size:15px;line-height:15px;color:#f0f0f0;white-space:pre;left:349px;">Показывать каналы в цвете</div>
<div style="position:absolute;left:325px;top:728px;width:15px;height:15px;background:#dedede;border-radius:3px"></div>
<svg style="position:absolute;left:325px;top:728px;" width="15" height="15" viewBox="0 0 15 15"><path d="M3.4 8 L7.2 11.6 L12.4 5.4" fill="none" stroke="#333" stroke-width="3.1"/></svg>
<div style="position:absolute;top:728.30px;font-size:15px;line-height:15px;color:#f0f0f0;white-space:pre;left:349px;">Показывать цвета меню</div>
<div style="position:absolute;left:579px;top:695px;width:15px;height:15px;background:#dedede;border-radius:3px"></div>
<svg style="position:absolute;left:579px;top:695px;" width="15" height="15" viewBox="0 0 15 15"><path d="M3.4 8 L7.2 11.6 L12.4 5.4" fill="none" stroke="#333" stroke-width="3.1"/></svg>
<div style="position:absolute;top:695.30px;font-size:15px;line-height:15px;color:#f0f0f0;white-space:pre;left:602px;">Динамические шкалы</div>
<div style="position:absolute;left:579px;top:728px;width:15px;height:15px;background:#dedede;border-radius:3px"></div>
<svg style="position:absolute;left:579px;top:728px;" width="15" height="15" viewBox="0 0 15 15"><path d="M3.4 8 L7.2 11.6 L12.4 5.4" fill="none" stroke="#333" stroke-width="3.1"/></svg>
<div style="position:absolute;top:728.30px;font-size:15px;line-height:15px;color:#f0f0f0;white-space:pre;letter-spacing:0.08px;left:602px;">Отображать упрощенные контекстное и всплывающее меню</div>
<div style="position:absolute;left:1732px;top:106px;width:95px;height:31px;border:2px solid #e6e6e6;border-radius:16px;box-sizing:border-box;"></div>
<div style="position:absolute;left:1732px;top:115.30px;width:95px;text-align:center;font-size:15px;line-height:15px;color:#f0f0f0">OK</div>
<div style="position:absolute;left:1732px;top:149px;width:95px;height:31px;border:1px solid #8a8a8a;border-radius:16px;box-sizing:border-box;"></div>
<div style="position:absolute;left:1732px;top:158.30px;width:95px;text-align:center;font-size:15px;line-height:15px;color:#f0f0f0">Отмена</div>
<div style="position:absolute;left:1732px;top:192px;width:95px;height:31px;border:1px solid #8a8a8a;border-radius:16px;box-sizing:border-box;"></div>
<div style="position:absolute;left:1732px;top:201.30px;width:95px;text-align:center;font-size:15px;line-height:15px;color:#f0f0f0">Назад</div>
<div style="position:absolute;left:1732px;top:235px;width:95px;height:31px;border:1px solid #8a8a8a;border-radius:16px;box-sizing:border-box;"></div>
<div style="position:absolute;left:1732px;top:244.30px;width:95px;text-align:center;font-size:15px;line-height:15px;color:#f0f0f0">Вперед</div>
</body></html>
